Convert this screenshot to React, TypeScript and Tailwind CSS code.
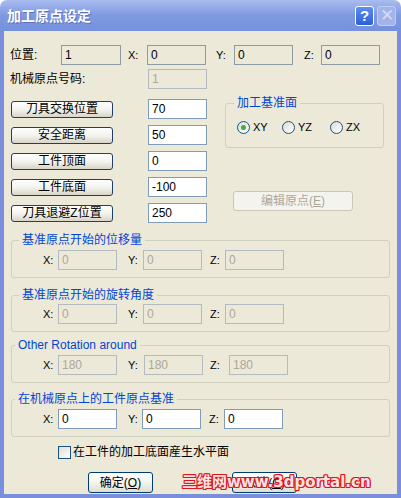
import React from 'react';

type Variant = 'enabled' | 'readonly' | 'disabled';

const fieldStyles: Record<Variant, string> = {
  enabled: 'bg-white border-[#7f9db9] text-black',
  readonly: 'bg-[#ece9d8] border-[#8f9ca6] text-black',
  disabled: 'bg-[#ece9d8] border-[#b3bac1] text-[#aca899]'
};

const Field = ({
  value,
  width,
  variant = 'enabled'
}: {
  value: string;
  width: string;
  variant?: Variant;
}) => (
  <div
    className={`${width} h-[20px] shrink-0 border ${fieldStyles[variant]} flex items-center pl-[3px] text-[12px]`}
  >
    {value}
  </div>
);

const ToolButton = ({ label }: { label: string }) => (
  <div className="ml-[1px] w-[102px] h-[17px] shrink-0 rounded-[3px] border border-[#1f3f66] bg-gradient-to-b from-white via-[#f3f3ee] to-[#d8d5c8] flex items-center justify-center text-[12px] leading-none">
    {label}
  </div>
);

const Radio = ({ label, checked, width }: { label: string; checked?: boolean; width: string }) => (
  <div className={`${width} flex items-center gap-[3px] text-[11px]`}>
    <div className="w-[13px] h-[13px] rounded-full border border-[#1c5180] bg-gradient-to-br from-[#dcdcd5] to-white flex items-center justify-center">
      {checked && <div className="w-[5px] h-[5px] rounded-full bg-[#3fae3f]" />}
    </div>
    <span>{label}</span>
  </div>
);

type Row = {
  y: string;
  yLabel: string;
  zGap: string;
  zLabel: string;
  value: string;
  variant: Variant;
};

const Group = ({
  title,
  legendMl,
  className,
  row
}: {
  title: string;
  legendMl: string;
  className: string;
  row: Row;
}) => (
  <fieldset className={`ml-[1px] w-[379px] border border-[#d0d0bf] rounded-[3px] pb-[7px] ${className}`}>
    <legend className={`${legendMl} px-[3px] text-[#0046d5] text-[12px] leading-[14px]`}>{title}</legend>
    <div className={`flex items-center ${row.y}`}>
      <span className="ml-[31px] w-[15px] text-[11px]">X:</span>
      <Field value={row.value} width="w-[59px]" variant={row.variant} />
      <span className={`ml-[11px] ${row.yLabel} text-[11px]`}>Y:</span>
      <Field value={row.value} width="w-[59px]" variant={row.variant} />
      <span className={`${row.zGap} ${row.zLabel} text-[11px]`}>Z:</span>
      <Field value={row.value} width="w-[59px]" variant={row.variant} />
    </div>
  </fieldset>
);

const OkButton = ({ children, className }: { children: React.ReactNode; className: string }) => (
  <div
    className={`${className} w-[65px] h-[21px] rounded-[3px] border border-[#003c74] bg-gradient-to-b from-white via-[#f4f4ef] to-[#e0ddd2] flex items-center justify-center text-[12px]`}
  >
    {children}
  </div>
);

export default function App() {
  const toolRows = [
    ['刀具交换位置', '70'],
    ['安全距离', '50'],
    ['工件顶面', '0'],
    ['工件底面', '-100'],
    ['刀具退避Z位置', '250']
  ];

  return (
    <div className="relative w-[401px] h-[498px] flex flex-col font-['Liberation_Sans','Noto_Sans_CJK_SC',sans-serif] text-black text-[12px]">
      {/* title bar */}
      <div className="h-[31px] shrink-0 rounded-t-[7px] bg-gradient-to-b from-[#a9bcef] via-[#7f99e1] to-[#7591dc] flex items-center pl-[7px] pr-[5px]">
        <span className="text-white font-bold text-[14px] [text-shadow:1px_1px_0_#5a70b8] font-['Noto_Sans_CJK_SC',sans-serif]">
          加工原点设定
        </span>
        <div className="ml-auto w-[19px] h-[20px] rounded-[3px] border border-white bg-gradient-to-b from-[#5d8ef2] to-[#2b5fd9] flex items-center justify-center text-white font-bold text-[15px] leading-none">
          ?
        </div>
        <div className="ml-[3px] w-[19px] h-[20px] rounded-[3px] border border-[#c0ccf2] bg-[#a1b3ea] flex items-center justify-center text-[#d3dbf6] text-[17px] leading-none">
          ✕
        </div>
      </div>

      {/* frame */}
      <div className="flex-1 flex flex-col bg-[#7a8edb] px-[4px] pb-[4px]">
        <div className="flex-1 flex flex-col bg-[#ece9d8] pl-[6px]">
          <div className="flex items-center h-[20px] mt-[14px]">
            <span className="w-[51px]">位置:</span>
            <Field value="1" width="w-[60px]" variant="readonly" />
            <span className="ml-[7px] w-[19px] text-[11px]">X:</span>
            <Field value="0" width="w-[59px]" variant="readonly" />
            <span className="ml-[10px] w-[18px] text-[11px]">Y:</span>
            <Field value="0" width="w-[59px]" variant="readonly" />
            <span className="ml-[11px] w-[17px] text-[11px]">Z:</span>
            <Field value="0" width="w-[59px]" variant="readonly" />
          </div>

          <div className="flex items-center h-[20px] mt-[4px]">
            <span className="w-[138px]">机械原点号码:</span>
            <Field value="1" width="w-[59px]" variant="disabled" />
          </div>

          <div className="flex mt-[10px]">
            <div className="flex flex-col gap-[6px]">
              {toolRows.map(([label, value]) => (
                <div key={label} className="flex items-center h-[20px]">
                  <ToolButton label={label} />
                  <div className="ml-[35px]">
                    <Field value={value} width="w-[59px]" />
                  </div>
                </div>
              ))}
            </div>

            <div className="ml-[18px] flex flex-col -mt-[3px]">
              <fieldset className="w-[159px] border border-[#d0d0bf] rounded-[3px] pb-[11px]">
                <legend className="ml-[8px] px-[3px] text-[#0046d5] text-[12px] leading-[14px]">加工基准面</legend>
                <div className="flex items-center mt-[9px] pl-[11px]">
                  <Radio label="XY" checked width="w-[45px]" />
                  <Radio label="YZ" width="w-[48px]" />
                  <Radio label="ZX" width="w-[45px]" />
                </div>
              </fieldset>
              <div className="mt-[43px] ml-[8px] w-[120px] h-[20px] rounded-[3px] border border-[#c9c7ba] bg-[#f4f3ee] flex items-center justify-center text-[#aca899] text-[12px]">
                编辑原点(<span className="underline">E</span>)
              </div>
            </div>
          </div>

          <Group
            title="基准原点开始的位移量"
            legendMl="ml-[7px]"
            className="mt-[10px]"
            row={{ y: 'mt-[3px]', yLabel: 'w-[15px]', zGap: 'ml-[8px]', zLabel: 'w-[15px]', value: '0', variant: 'disabled' }}
          />
          <Group
            title="基准原点开始的旋转角度"
            legendMl="ml-[7px]"
            className="mt-[10px]"
            row={{ y: 'mt-[2px]', yLabel: 'w-[15px]', zGap: 'ml-[8px]', zLabel: 'w-[15px]', value: '0', variant: 'disabled' }}
          />
          <Group
            title="Other Rotation around"
            legendMl="ml-[3px]"
            className="mt-[6px]"
            row={{ y: 'mt-[3px]', yLabel: 'w-[16px]', zGap: 'ml-[7px]', zLabel: 'w-[19px]', value: '180', variant: 'disabled' }}
          />
          <Group
            title="在机械原点上的工件原点基准"
            legendMl="ml-[3px]"
            className="mt-[9px]"
            row={{ y: 'mt-[3px]', yLabel: 'w-[14px]', zGap: 'ml-[8px]', zLabel: 'w-[15px]', value: '0', variant: 'enabled' }}
          />

          <div className="flex items-center mt-[6px] ml-[48px]">
            <div className="w-[13px] h-[13px] border border-[#1c5180] bg-gradient-to-br from-[#dcdcd7] to-white" />
            <span className="ml-[2px]">在工件的加工底面産生水平面</span>
          </div>

          <div className="flex mt-[11px]">
            <OkButton className="ml-[78px]">
              确定(<span className="underline">O</span>)
            </OkButton>
            <OkButton className="ml-[79px]">
              取消(<span className="underline">C</span>)
            </OkButton>
          </div>
        </div>
      </div>

      {/* watermark */}
      <div className="absolute left-[182px] top-[475px] text-[15px] font-bold leading-none tracking-[0px] text-[#fbe3e3] font-['DejaVu_Sans','Noto_Sans_CJK_SC',sans-serif] [text-shadow:1px_0_0_#e0141c,-1px_0_0_#e0141c,0_1px_0_#e0141c,0_-1px_0_#e0141c,1px_1px_0_#e0141c,-1px_-1px_0_#e0141c,1px_-1px_0_#e0141c,-1px_1px_0_#e0141c]">
        三维网www.3dportal.cn
      </div>
    </div>
  );
}
